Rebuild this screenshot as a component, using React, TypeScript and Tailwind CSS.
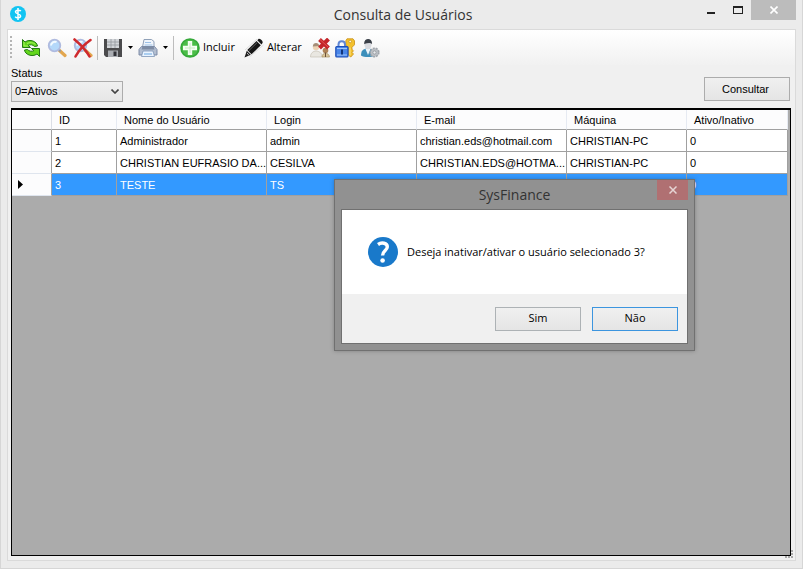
import React from "react";

const columns = ["ID", "Nome do Usuário", "Login", "E-mail", "Máquina", "Ativo/Inativo"];

const rows = [
  ["1", "Administrador", "admin", "christian.eds@hotmail.com", "CHRISTIAN-PC", "0"],
  ["2", "CHRISTIAN EUFRASIO DA...", "CESILVA", "CHRISTIAN.EDS@HOTMA...", "CHRISTIAN-PC", "0"],
  ["3", "TESTE", "TS", "", "", "0"],
];

const selectedId = "3";

function LogoIcon() {
  return (
    <svg viewBox="0 0 16 16" className="size-4 shrink-0" aria-hidden="true">
      <circle cx="8" cy="8" r="8" fill="#12c4f2" />
      <path d="M10.8 5.2C10 3.800 5.600 3.600 5.500 5.900c-.1 2.300 5.100 1.700 5.100 4.200 0 2.400-4.500 2.100-5.400.5M8 2v12" fill="none" stroke="#fff" strokeWidth="1.500" />
    </svg>
  );
}

function RefreshIcon() {
  return (
    <svg viewBox="0 0 20 20" className="size-5" aria-hidden="true">
      <g fill="#63d61c" stroke="#237a14" strokeWidth="1" strokeLinejoin="round">
        <path d="M1.500 1.500v8h8L7.200 7.300c2-1 4.800-.6 6.300 1.200l3-.5C16 3.500 9 .5 4 4z" />
        <path d="M18.500 18.500v-8h-8l2.300 2.200c-2 1-4.800.6-6.300-1.200l-3 .5C4 16.500 11 19.500 16 16z" />
      </g>
      <path d="M3 4v4h4M6 5.500c3-1.500 6-1 8.500.8" fill="none" stroke="#a4f35e" strokeWidth="1" />
    </svg>
  );
}

function LensShape() {
  return (
    <>
      <path d="M12.500 12.500l5.500 5" stroke="#e2a64e" strokeWidth="3.200" strokeLinecap="round" />
      <path d="M11.500 11.500l2 2" stroke="#8f98a8" strokeWidth="2" />
      <circle cx="7.500" cy="7.500" r="5.800" fill="#b4d8fa" stroke="#b0bbdf" strokeWidth="1.800" />
      <path d="M4 7.500a4 4 0 0 1 5.500-3.500" stroke="#f3faff" strokeWidth="2" fill="none" />
    </>
  );
}

function SearchIcon() {
  return (
    <svg viewBox="0 0 20 20" className="size-5" aria-hidden="true">
      <LensShape />
    </svg>
  );
}

function ClearSearchIcon() {
  return (
    <svg viewBox="0 0 20 20" className="size-5" aria-hidden="true">
      <LensShape />
      <path d="M1.500 1.500C7 6 13 12 16.500 18.500M17.500 2C11 6.500 6 12 2.500 18.500" stroke="#cf2a2e" strokeWidth="2.600" strokeLinecap="round" fill="none" />
    </svg>
  );
}

function SaveIcon() {
  return (
    <svg viewBox="0 0 20 20" className="size-5" aria-hidden="true">
      <path d="M1 1h18v18H3l-2-2z" fill="#4b4b4d" />
      <rect x="4" y="1" width="12" height="9" fill="#d2d5d9" />
      <path d="M4 4h12M4 7h12M8 1v9M12 1v9" stroke="#93979d" strokeWidth=".8" />
      <rect x="5" y="12.500" width="10" height="6.500" fill="#aaadb2" />
      <rect x="10.500" y="13.500" width="3" height="4.500" fill="#303136" />
    </svg>
  );
}

function PrinterIcon() {
  return (
    <svg viewBox="0 0 20 20" className="size-5" aria-hidden="true">
      <path d="M6 1.500h7.500l2.500 2V9H4.500z" fill="#f0f5fb" stroke="#8496b0" strokeWidth=".9" />
      <path d="M7 4.500h6M6.500 7h8" stroke="#9cc0e6" />
      <path d="M3.500 8.500h13l2.500 3v5.500H1v-5.500z" fill="#b3bed0" stroke="#7483a0" strokeWidth=".9" />
      <path d="M4.500 8.500h11l1 3h-13z" fill="#7d8ba3" />
      <path d="M5 13h10l1.500 5.500h-13z" fill="#eaf4ff" stroke="#7d95b6" strokeWidth=".8" />
      <path d="M6 16h8" stroke="#7fb4e6" strokeWidth="1.200" />
    </svg>
  );
}

function AddIcon() {
  return (
    <svg viewBox="0 0 20 20" className="size-5" aria-hidden="true">
      <circle cx="10" cy="10" r="9.800" fill="#35a939" />
      <circle cx="10" cy="10" r="8.200" fill="#4bbd48" />
      <path d="M7.800 3h4.400v4.800H17v4.400h-4.800V17H7.800v-4.800H3V7.800h4.800z" fill="#f4fff2" />
      <path d="M10 5v10M5 10h10" stroke="#c9e8c4" strokeWidth="1" />
    </svg>
  );
}

function PencilIcon() {
  return (
    <svg viewBox="0 0 20 20" className="size-5" aria-hidden="true">
      <path d="M6 18.500L19.500 7M1 12L13 1" stroke="#dedede" strokeWidth="1" />
      <path d="M.5 19.500l2.300-6.700 4 4z" fill="#1b1b1b" />
      <path d="M3.300 12L12.500 3l4.300 4.300-9.300 9z" fill="#161616" />
      <path d="M13.300 2.200l1.200-1.200c1.500-1 5 2.500 4 4L17.500 6.500z" fill="#161616" />
      <path d="M5 12.500l8-7.800" stroke="#686868" strokeWidth=".9" />
      <path d="M3 15.200l1.800 1.700" stroke="#fff" strokeWidth=".8" />
    </svg>
  );
}

function RemoveUserIcon() {
  return (
    <svg viewBox="0 0 20 20" className="size-5" aria-hidden="true">
      <circle cx="6" cy="9" r="3.200" fill="#ecd2b4" />
      <path d="M2.800 8.500c0-4.500 6.200-4.500 6.400-.5z" fill="#a58e78" />
      <path d="M.5 19c0-8 11-8 12 0z" fill="#e9e7e1" stroke="#c6c0b5" strokeWidth=".7" />
      <circle cx="15.500" cy="12.500" r="2.800" fill="#ae8257" />
      <path d="M12 19c0-5 7-5 7.500 0z" fill="#d9c59a" stroke="#a68f63" strokeWidth=".7" />
      <path d="M15.500 14.500v4.500" stroke="#6c5038" />
      <path d="M9.500 1.500l9 8.500M18.500 1L9.500 10" stroke="#c4262a" strokeWidth="4" />
      <path d="M10 1.500l8 7.500" stroke="#e2554f" strokeWidth="1" />
    </svg>
  );
}

function LockKeyIcon() {
  return (
    <svg viewBox="0 0 20 20" className="size-5" aria-hidden="true">
      <path d="M12 .8h6l1.500 2v4l-2.500 2.500v2.200l1.500 1.300-1.500 1.500 1.500 1.700-2.700 3-2.500-2V9.300L10.800 7V2.800z" fill="#f3c12e" stroke="#c98f14" strokeWidth=".8" />
      <circle cx="15.200" cy="3.500" r="1.300" fill="#fff6d6" stroke="#b9820e" strokeWidth=".6" />
      <path d="M15 9.500v8" stroke="#fbe48b" strokeWidth="1" />
      <path d="M3.500 9V6.500c0-4.500 6.500-4.500 6.500 0V9" fill="none" stroke="#5f86d4" strokeWidth="2" />
      <rect x=".8" y="8.500" width="12.200" height="10.500" rx="1" fill="#4a86e8" stroke="#1d4fb8" strokeWidth="1.200" />
      <path d="M2 10.500h10M2 17h10" stroke="#a3c6fa" />
      <path d="M7 11.500v5" stroke="#12357a" strokeWidth="2" />
    </svg>
  );
}

function UserSettingsIcon() {
  return (
    <svg viewBox="0 0 20 20" className="size-5" aria-hidden="true">
      <path d="M1 17.500C1 13 3 10.500 8 10.500s7 3 7 7c-3 2-11 2-14 0z" fill="#3c8fbb" />
      <path d="M5.500 11L8 17l2.500-6z" fill="#edf5fb" />
      <ellipse cx="8" cy="6.500" rx="3.600" ry="4.800" fill="#d9dbe0" />
      <path d="M4.200 6C3.500-.8 12.800-.8 12 6c-1.500-1.600-4.500-.9-7.800 0z" fill="#3a4048" />
      <circle cx="14.500" cy="14.500" r="4.300" fill="#bcc0c5" stroke="#a0a5ab" strokeWidth="1.600" strokeDasharray="2 1" />
      <circle cx="14.500" cy="14.500" r="1.600" fill="#e9ebed" stroke="#8b9097" strokeWidth=".7" />
    </svg>
  );
}

function DropArrow() {
  return (
    <svg viewBox="0 0 5 3" className="h-[3px] w-[5px]" aria-hidden="true">
      <path d="M0 0h5L2.500 3z" fill="#000" />
    </svg>
  );
}

function ToolButton({ label, children }: { label: string; children: React.ReactNode }) {
  return (
    <button type="button" aria-label={label} className="flex shrink-0 items-center">
      {children}
    </button>
  );
}

function Separator() {
  return <span className="h-6 w-px shrink-0 bg-[#bdbdbd]" />;
}

function TitleBar() {
  return (
    <header className="grid h-[29px] shrink-0 grid-cols-[1fr_auto_1fr] items-start pr-[6px] pl-[9px]">
      <div className="pt-[6px]">
        <LogoIcon />
      </div>
      <h1 className="pt-[5px] font-['Open_Sans','Noto_Sans',sans-serif] text-[14px] leading-5 text-[#333]">
        Consulta de Usuários
      </h1>
      <div className="flex justify-end">
        <button type="button" aria-label="Minimizar" className="flex h-5 w-[27px] justify-center pt-[12px]">
          <span className="h-[2px] w-2 bg-[#222]" />
        </button>
        <button type="button" aria-label="Maximizar" className="flex h-5 w-[27px] justify-center pt-[6px]">
          <span className="h-2 w-[10px] border border-t-2 border-[#222]" />
        </button>
        <button type="button" aria-label="Fechar" className="flex h-5 w-[45px] items-center justify-center bg-[#bcbcbc]">
          <svg viewBox="0 0 8 8" className="size-2" aria-hidden="true">
            <path d="M.5.5l7 7M7.500.5l-7 7" stroke="#fff" strokeWidth="1.600" />
          </svg>
        </button>
      </div>
    </header>
  );
}

function Toolbar() {
  return (
    <div className="flex h-[35px] shrink-0 items-center bg-linear-to-b from-white to-[#f1f1f1] pl-[2px] font-['Open_Sans','Noto_Sans',sans-serif] text-[11px] text-black">
      <span className="h-[23px] w-[2px] bg-[repeating-linear-gradient(to_bottom,#b5b5b5_0_2px,transparent_2px_4px)]" />
      <div className="ml-[9px] flex gap-[6px]">
        <ToolButton label="Atualizar"><RefreshIcon /></ToolButton>
        <ToolButton label="Pesquisar"><SearchIcon /></ToolButton>
        <ToolButton label="Limpar pesquisa"><ClearSearchIcon /></ToolButton>
      </div>
      <div className="ml-[4px] flex items-center gap-[5px]">
        <Separator />
        <ToolButton label="Salvar"><SaveIcon /></ToolButton>
        <ToolButton label="Opções de salvar"><DropArrow /></ToolButton>
        <ToolButton label="Imprimir"><PrinterIcon /></ToolButton>
        <ToolButton label="Opções de impressão"><DropArrow /></ToolButton>
        <Separator />
      </div>
      <button type="button" className="ml-[6px] flex items-center gap-[3px]"><AddIcon />Incluir</button>
      <button type="button" className="ml-[9px] flex items-center gap-[3px]"><PencilIcon />Alterar</button>
      <div className="ml-[8px] flex gap-[5px]">
        <ToolButton label="Inativar usuário"><RemoveUserIcon /></ToolButton>
        <ToolButton label="Permissões"><LockKeyIcon /></ToolButton>
        <ToolButton label="Configurar usuário"><UserSettingsIcon /></ToolButton>
      </div>
    </div>
  );
}

function Filters() {
  return (
    <div className="flex shrink-0 items-end justify-between pr-[5px] pl-[3px] text-[11px]">
      <div className="flex flex-col">
        <label htmlFor="status" className="h-4 leading-4">Status</label>
        <div className="relative">
          <select
            id="status"
            defaultValue="0"
            className="block h-[21px] w-28 appearance-none border border-[#acacac] bg-linear-to-b from-[#f0f0f0] to-[#e6e6e6] pl-[3px]"
          >
            <option value="0">0=Ativos</option>
            <option value="1">1=Inativos</option>
          </select>
          <svg viewBox="0 0 8 5" className="pointer-events-none absolute top-2 right-1 h-[5px] w-2" aria-hidden="true">
            <path d="M.5.5L4 4 7.500.5" fill="none" stroke="#444" strokeWidth="1.600" />
          </svg>
        </div>
      </div>
      <button type="button" className="mb-px h-6 w-[86px] border border-[#acacac] bg-linear-to-b from-[#f0f0f0] to-[#e5e5e5] pr-[3px]">
        Consultar
      </button>
    </div>
  );
}

function UserTable() {
  return (
    <table className="w-full table-fixed border-separate border-spacing-0 text-left text-[11px] leading-4">
      <colgroup>
        <col className="w-10" />
        <col className="w-[65px]" />
        <col className="w-[150px]" />
        <col className="w-[150px]" />
        <col className="w-[150px]" />
        <col className="w-[120px]" />
        <col />
      </colgroup>
      <thead>
        <tr className="h-5 bg-[#fcfcfd]">
          <td className="border-r border-b border-r-[#dcdfe6] border-b-[#a0a0a0]" />
          {columns.map((column) => (
            <th key={column} className="border-r border-b border-r-[#e6eaf2] border-b-[#a0a0a0] py-0 pr-0 pl-[7px] font-normal">
              {column}
            </th>
          ))}
        </tr>
      </thead>
      <tbody>
        {rows.map((row) => {
          const selected = row[0] === selectedId;
          return (
            <tr key={row[0]} className={selected ? "h-[22px] bg-[#3399ff] text-white" : "h-[22px] bg-white"}>
              <td className="border-r border-b border-r-[#a0a0a0] border-b-[#dfe5ee] bg-[#fcfcfd] p-0 pl-[6px]">
                {selected && (
                  <svg viewBox="0 0 5 9" className="h-[9px] w-[5px]" aria-hidden="true">
                    <path d="M0 0l5 4.500L0 9z" fill="#000" />
                  </svg>
                )}
              </td>
              {row.map((value, index) => (
                <td key={columns[index]} className="border-r border-b border-[#a0a0a0] py-0 pr-0 pl-[3px] whitespace-nowrap">
                  {value}
                </td>
              ))}
            </tr>
          );
        })}
      </tbody>
    </table>
  );
}

function ConfirmDialog() {
  return (
    <section
      role="dialog"
      aria-labelledby="dialog-title"
      className="absolute top-[179px] left-[333px] w-[361px] border border-[#707070] bg-[#919191] px-[6px] pb-[6px] font-['Open_Sans','Noto_Sans',sans-serif] shadow-[0_0_4px_rgba(0,0,0,0.25)]"
    >
      <div className="grid h-[29px] grid-cols-[1fr_auto_1fr] items-start">
        <h2 id="dialog-title" className="col-start-2 pt-[5px] text-[14px] leading-5 text-[#333]">SysFinance</h2>
        <button type="button" aria-label="Fechar diálogo" className="flex h-5 w-[31px] items-center justify-center justify-self-end bg-[#b07072]">
          <svg viewBox="0 0 8 8" className="size-2" aria-hidden="true">
            <path d="M.5.5l7 7M7.500.5l-7 7" stroke="#e6d5d5" strokeWidth="1.500" />
          </svg>
        </button>
      </div>
      <div className="border border-[#707070] text-[11px] text-black">
        <div className="flex h-[84px] items-center gap-[9px] bg-white pl-[26px]">
          <svg viewBox="0 0 30 30" className="size-[30px] shrink-0" aria-hidden="true">
            <circle cx="15" cy="15" r="15" fill="#1979ca" />
            <path d="M10 7.500c3.500-2.500 9.500-1.600 9.300 2.500-.2 3.600-4.700 3.600-4.700 8.500" fill="none" stroke="#fff" strokeWidth="3.400" />
            <circle cx="14.600" cy="23.500" r="2.300" fill="#fff" />
          </svg>
          <p>Deseja inativar/ativar o usuário selecionado 3?</p>
        </div>
        <div className="flex h-[49px] items-center justify-end gap-[11px] bg-[#f0f0f0] pr-[9px]">
          <button type="button" className="h-6 w-[86px] border border-[#adb2b5] bg-linear-to-b from-[#f0f0f0] to-[#e5e5e5]">Sim</button>
          <button type="button" className="h-6 w-[86px] border border-[#3c95df] bg-linear-to-b from-[#f0f0f0] to-[#e5e5e5]">Não</button>
        </div>
      </div>
    </section>
  );
}

export default function App() {
  return (
    <div className="relative flex h-screen flex-col overflow-hidden border border-t-0 border-[#d6d6d6] bg-[#ebebeb] font-['Liberation_Sans',Arial,sans-serif] text-black">
      <TitleBar />
      <main className="mx-[6px] mb-[7px] flex min-h-0 grow flex-col border border-[#dadada] bg-[#f0f0f0]">
        <Toolbar />
        <Filters />
        <div className="mr-[4px] mt-[6px] mb-[4px] ml-[3px] min-h-0 grow border border-t-2 border-black bg-[#ababab] pr-[2px]">
          <UserTable />
        </div>
      </main>
      <svg viewBox="0 0 8 8" className="absolute right-[9px] bottom-[10px] size-2" aria-hidden="true">
        <path d="M6 0h2v2H6zM3 3h2v2H3zM6 3h2v2H6zM0 6h2v2H0zM3 6h2v2H3zM6 6h2v2H6z" fill="#a8a8a8" />
      </svg>
      <ConfirmDialog />
    </div>
  );
}
